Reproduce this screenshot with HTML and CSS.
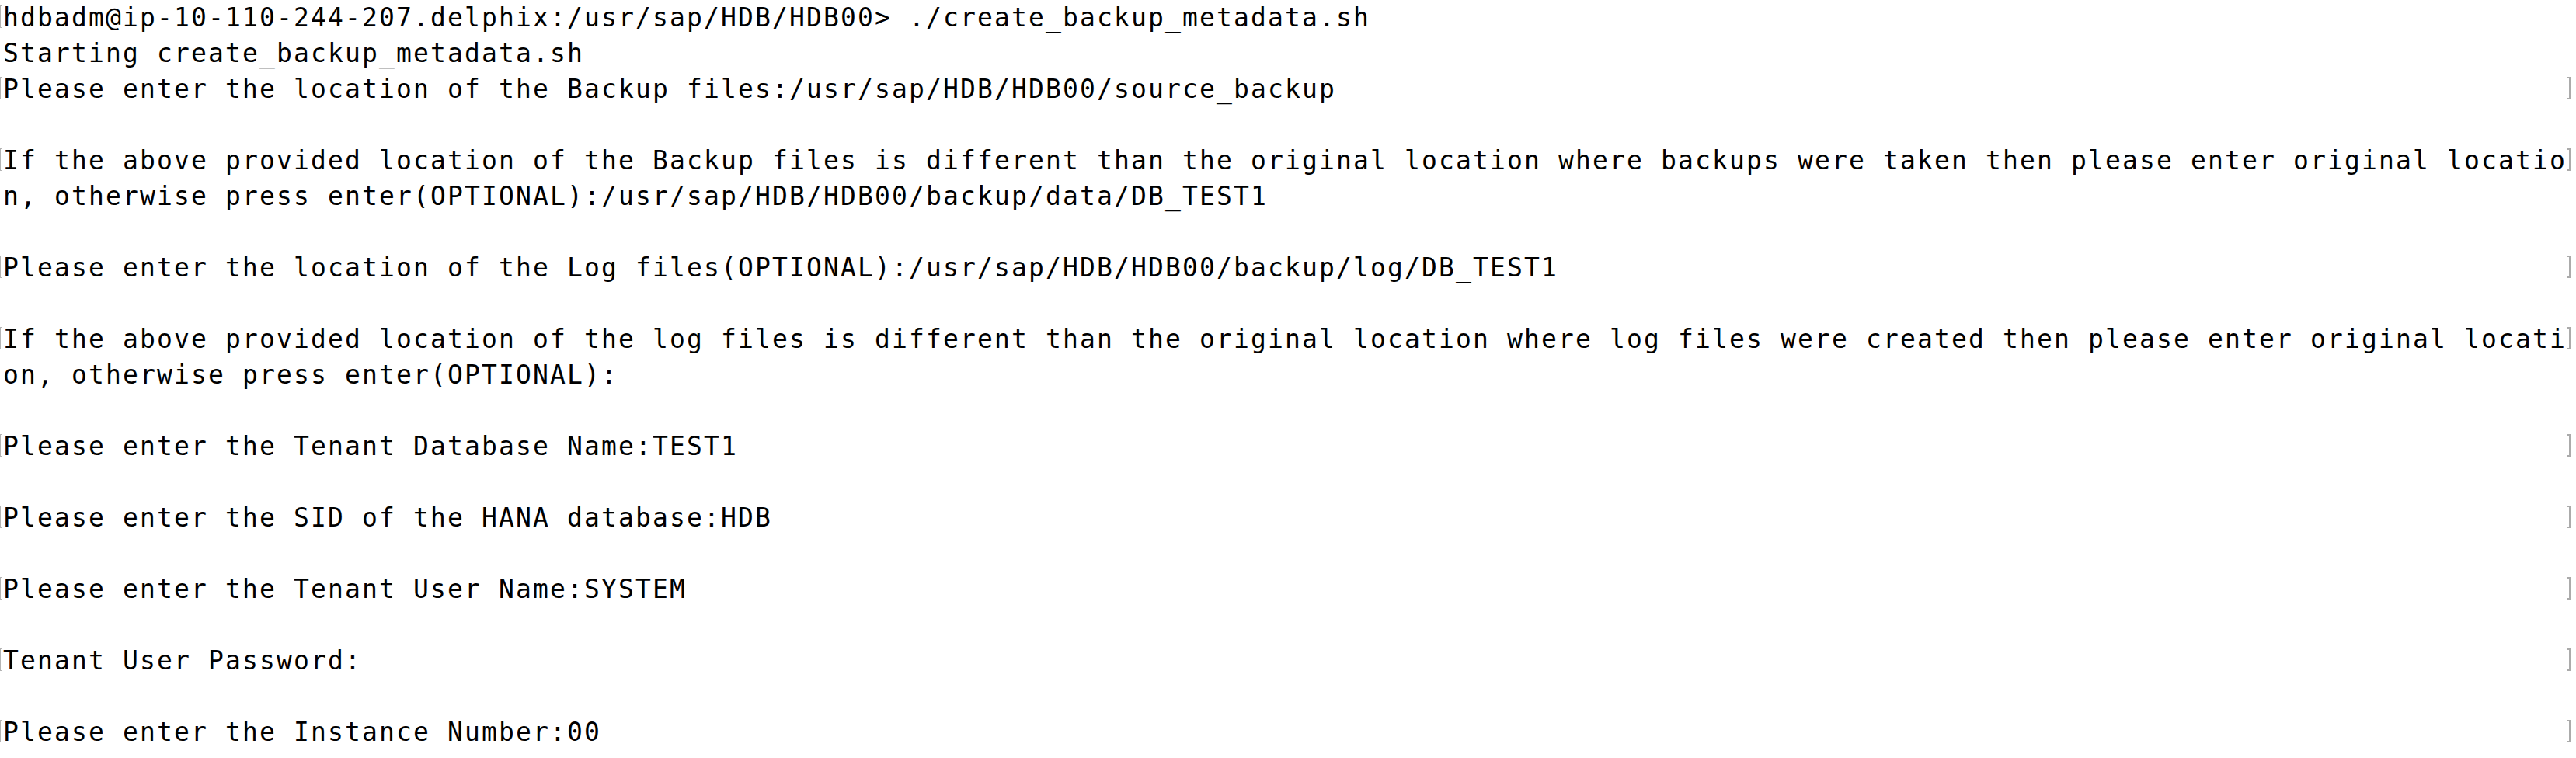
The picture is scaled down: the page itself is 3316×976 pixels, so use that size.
FILE: index.html
```html
<!DOCTYPE html>
<html lang="en">
<head>
<meta charset="utf-8">
<title>Terminal</title>
<link rel="stylesheet" href="styles.css">
</head>
<body>
<main class="term">
  <div class="row"><span class="gutter marked"></span><span class="text">hdbadm@ip-10-110-244-207.delphix:/usr/sap/HDB/HDB00&gt; ./create_backup_metadata.sh</span></div>
  <div class="row"><span class="gutter"></span><span class="text">Starting create_backup_metadata.sh</span></div>
  <div class="row"><span class="gutter marked"></span><span class="text">Please enter the location of the Backup files:/usr/sap/HDB/HDB00/source_backup</span><span class="end"></span></div>
  <div class="row"><span class="gutter"></span><span class="text"></span></div>
  <div class="row"><span class="gutter marked"></span><span class="text">If the above provided location of the Backup files is different than the original location where backups were taken then please enter original locatio</span><span class="end"></span></div>
  <div class="row"><span class="gutter"></span><span class="text">n, otherwise press enter(OPTIONAL):/usr/sap/HDB/HDB00/backup/data/DB_TEST1</span></div>
  <div class="row"><span class="gutter"></span><span class="text"></span></div>
  <div class="row"><span class="gutter marked"></span><span class="text">Please enter the location of the Log files(OPTIONAL):/usr/sap/HDB/HDB00/backup/log/DB_TEST1</span><span class="end"></span></div>
  <div class="row"><span class="gutter"></span><span class="text"></span></div>
  <div class="row"><span class="gutter marked"></span><span class="text">If the above provided location of the log files is different than the original location where log files were created then please enter original locati</span><span class="end"></span></div>
  <div class="row"><span class="gutter"></span><span class="text">on, otherwise press enter(OPTIONAL):</span></div>
  <div class="row"><span class="gutter"></span><span class="text"></span></div>
  <div class="row"><span class="gutter marked"></span><span class="text">Please enter the Tenant Database Name:TEST1</span><span class="end"></span></div>
  <div class="row"><span class="gutter"></span><span class="text"></span></div>
  <div class="row"><span class="gutter marked"></span><span class="text">Please enter the SID of the HANA database:HDB</span><span class="end"></span></div>
  <div class="row"><span class="gutter"></span><span class="text"></span></div>
  <div class="row"><span class="gutter marked"></span><span class="text">Please enter the Tenant User Name:SYSTEM</span><span class="end"></span></div>
  <div class="row"><span class="gutter"></span><span class="text"></span></div>
  <div class="row"><span class="gutter marked"></span><span class="text">Tenant User Password:</span><span class="end"></span></div>
  <div class="row"><span class="gutter"></span><span class="text"></span></div>
  <div class="row"><span class="gutter marked"></span><span class="text">Please enter the Instance Number:00</span><span class="end"></span></div>
</main>
</body>
</html>
```
FILE: styles.css
```css
html, body {
  margin: 0;
  padding: 0;
  background: #ffffff;
}

.term {
  display: flex;
  flex-direction: column;
  width: 3316px;
  height: 976px;
  overflow: hidden;
  font-family: "DejaVu Sans Mono", "Liberation Mono", monospace;
  font-size: 33px;
  color: #000000;
}

.row {
  display: flex;
  align-items: flex-start;
  height: 46px;
  flex: none;
}

.gutter {
  flex: none;
  width: 4px;
  height: 29px;
  margin-top: 7px;
  box-sizing: border-box;
}

.gutter.marked::before {
  content: "";
  display: block;
  width: 3px;
  height: 29px;
  box-sizing: border-box;
  border: 1px solid #b4b4b4;
  border-right: none;
  border-left-width: 1px;
}

.text {
  flex: none;
  width: 3300px;
  height: 46px;
  line-height: 46px;
  white-space: pre;
  overflow: hidden;
  letter-spacing: calc(22px - 1ch);
}

.end {
  flex: none;
  width: 5px;
  height: 29px;
  margin-top: 7px;
  margin-left: 1px;
  box-sizing: border-box;
  border-top: 2px solid #ababab;
  border-bottom: 2px solid #ababab;
  border-right: 3px solid #ababab;
}
```
